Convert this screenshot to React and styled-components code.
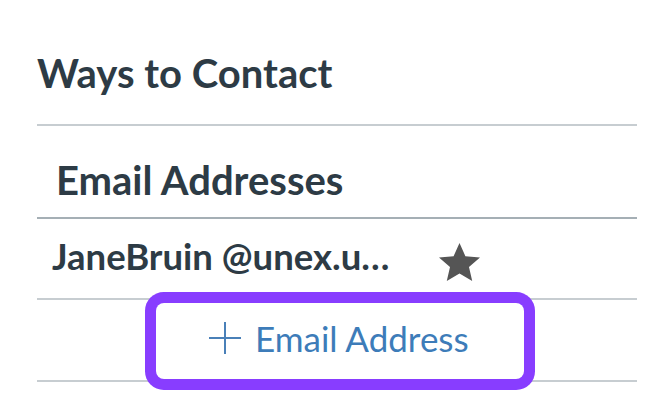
import React from "react";
import styled, { createGlobalStyle } from "styled-components";

const Global = createGlobalStyle`
  html, body { margin: 0; padding: 0; background: #fff; }
  body { font-family: Lato, "Noto Sans", sans-serif; color: #2d3b45; }
`;

const Page = styled.div`
  width: 657px;
  height: 417px;
  padding: 0 20px 0 37px;
  box-sizing: border-box;
  overflow: hidden;
`;

const Title = styled.h2`
  margin: 0;
  height: 126px;
  box-sizing: border-box;
  padding: 49px 0 0 0;
  font-size: 40px;
  font-weight: 700;
  line-height: 48px;
  border-bottom: 2px solid #c7cdd1;
`;

const SectionHeader = styled.h3`
  margin: 0;
  height: 93px;
  box-sizing: border-box;
  padding: 30px 0 0 19px;
  font-size: 40px;
  font-weight: 700;
  line-height: 48px;
  border-bottom: 2px solid #a5afb5;
`;

const Row = styled.div`
  display: flex;
  align-items: flex-start;
  height: ${(p) => p.$h}px;
  box-sizing: border-box;
  border-bottom: 2px solid #c7cdd1;
  justify-content: ${(p) => (p.$center ? "center" : "flex-start")};
`;

const Email = styled.span`
  font-size: 36.5px;
  font-weight: 700;
  line-height: 44px;
  padding: 15px 0 0 15px;
  width: 402px;
  box-sizing: border-box;
  white-space: nowrap;
`;

const Star = styled.svg`
  width: 41px;
  height: 38px;
  margin-top: 24px;
  fill: #555555;
`;

const AddButton = styled.button`
  display: flex;
  align-items: flex-start;
  gap: 14px;
  background: #fff;
  border: none;
  box-sizing: border-box;
  padding: 0 0 0 53px;
  width: 368px;
  height: 76px;
  margin: 3px 0 0 6px;
  border-radius: 8px;
  box-shadow: 0 0 0 11px #883dff;
  font-family: Lato, "Noto Sans", sans-serif;
  font-size: 35px;
  font-weight: 400;
  line-height: 42px;
  color: #3d7cb9;
  cursor: pointer;
`;

const Plus = styled.svg`
  width: 32px;
  height: 32px;
  margin-top: 19px;
  stroke: #4a80b8;
  stroke-width: 2;
  flex: none;
`;

const Label = styled.span`
  margin-top: 14px;
`;

export default function App() {
  return (
    <>
      <Global />
      <Page>
        <Title>Ways to Contact</Title>
        <SectionHeader>Email Addresses</SectionHeader>
        <Row $h={81}>
          <Email>JaneBruin @unex.u…</Email>
          <Star viewBox="1.2 1.5 21.6 20.5" preserveAspectRatio="none">
            <path d="M12 1.5l3.1 7.1 7.7.7-5.8 5.1 1.7 7.6L12 18l-6.7 4 1.7-7.6L1.2 9.3l7.7-.7z" strokeLinejoin="round" />
          </Star>
        </Row>
        <Row $h={82} $center>
          <AddButton>
            <Plus viewBox="0 0 32 32">
              <path d="M16 0v32M0 16h32" fill="none" />
            </Plus>
            <Label>Email Address</Label>
          </AddButton>
        </Row>
      </Page>
    </>
  );
}
